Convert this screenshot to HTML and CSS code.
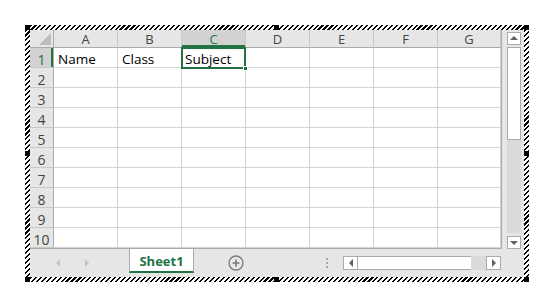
FILE: index.html
```html
<!DOCTYPE html>
<html lang="en">
<head>
    <meta charset="UTF-8">
    <title>Book1 - Embedded Sheet</title>
    <link rel="stylesheet" href="styles.css">
</head>
<body>
    <div class="frame">
        <div class="book">
            <div class="main">
                <div class="sheet">
                    <div class="corner">
                        <svg width="12" height="12" viewBox="0 0 12 12"><polygon points="12,0 12,12 0,12" fill="#bdbdbd"/></svg>
                    </div>
                    <div class="col-head">A</div>
                    <div class="col-head">B</div>
                    <div class="col-head on">C</div>
                    <div class="col-head">D</div>
                    <div class="col-head">E</div>
                    <div class="col-head">F</div>
                    <div class="col-head">G</div>

                    <div class="row-head on">1</div>
                    <div class="cell">Name</div><div class="cell">Class</div><div class="cell active">Subject</div><div class="cell"></div><div class="cell"></div><div class="cell"></div><div class="cell"></div>

                    <div class="row-head">2</div>
                    <div class="cell"></div><div class="cell"></div><div class="cell"></div><div class="cell"></div><div class="cell"></div><div class="cell"></div><div class="cell"></div>

                    <div class="row-head">3</div>
                    <div class="cell"></div><div class="cell"></div><div class="cell"></div><div class="cell"></div><div class="cell"></div><div class="cell"></div><div class="cell"></div>

                    <div class="row-head">4</div>
                    <div class="cell"></div><div class="cell"></div><div class="cell"></div><div class="cell"></div><div class="cell"></div><div class="cell"></div><div class="cell"></div>

                    <div class="row-head">5</div>
                    <div class="cell"></div><div class="cell"></div><div class="cell"></div><div class="cell"></div><div class="cell"></div><div class="cell"></div><div class="cell"></div>

                    <div class="row-head">6</div>
                    <div class="cell"></div><div class="cell"></div><div class="cell"></div><div class="cell"></div><div class="cell"></div><div class="cell"></div><div class="cell"></div>

                    <div class="row-head">7</div>
                    <div class="cell"></div><div class="cell"></div><div class="cell"></div><div class="cell"></div><div class="cell"></div><div class="cell"></div><div class="cell"></div>

                    <div class="row-head">8</div>
                    <div class="cell"></div><div class="cell"></div><div class="cell"></div><div class="cell"></div><div class="cell"></div><div class="cell"></div><div class="cell"></div>

                    <div class="row-head">9</div>
                    <div class="cell"></div><div class="cell"></div><div class="cell"></div><div class="cell"></div><div class="cell"></div><div class="cell"></div><div class="cell"></div>

                    <div class="row-head">10</div>
                    <div class="cell"></div><div class="cell"></div><div class="cell"></div><div class="cell"></div><div class="cell"></div><div class="cell"></div><div class="cell"></div>
                </div>

                <div class="vscroll">
                    <div class="sbtn"><span class="arrow up"></span></div>
                    <div class="vtrack"><div class="vthumb"></div></div>
                    <div class="sbtn"><span class="arrow down"></span></div>
                </div>
            </div>

            <div class="tabbar">
                <div class="tabnav">
                    <span class="arrow left faint"></span>
                    <span class="arrow right faint"></span>
                </div>
                <div class="tab">Sheet1</div>
                <div class="addsheet">
                    <svg width="16" height="16" viewBox="0 0 16 16">
                        <circle cx="8" cy="8" r="7" fill="none" stroke="#7a7a7a" stroke-width="1.3"/>
                        <path d="M8 4.5v7M4.5 8h7" stroke="#7a7a7a" stroke-width="1.6"/>
                    </svg>
                </div>
                <div class="split"><span></span><span></span><span></span></div>
                <div class="hscroll">
                    <div class="sbtn"><span class="arrow left"></span></div>
                    <div class="hthumb"></div>
                    <div class="htrack"></div>
                    <div class="sbtn"><span class="arrow right"></span></div>
                </div>
            </div>
        </div>

        <span class="handle tl"></span>
        <span class="handle tc"></span>
        <span class="handle tr"></span>
        <span class="handle ml"></span>
        <span class="handle mr"></span>
        <span class="handle bl"></span>
        <span class="handle bc"></span>
        <span class="handle br"></span>
    </div>
</body>
</html>
```

FILE: styles.css
```css
body {
    margin: 0;
    padding: 25px 0 0 25px;
    background-color: #fff;
    font-family: "Open Sans", "Noto Sans", sans-serif;
}
.frame {
    position: relative;
    width: 494px;
    padding: 5px;
    background: repeating-linear-gradient(135deg, #000 0 1.5px, #fff 1.5px 3.5px);
}
.book {
    background-color: #e6e6e6;
}
.main {
    display: flex;
}
.sheet {
    display: grid;
    grid-template-columns: 24px repeat(6, 64px) 63px;
    grid-template-rows: 18px repeat(10, 20px);
    background-color: #fff;
    border-right: 1px solid #ababab;
    border-bottom: 1px solid #ababab;
}
.sheet > div {
    box-sizing: border-box;
    overflow: visible;
}
.corner {
    background-color: #e6e6e6;
    border-right: 1px solid #ababab;
    border-bottom: 1px solid #ababab;
    display: flex;
    align-items: flex-end;
    justify-content: flex-end;
    padding: 0 2px 2px 0;
}
.corner svg {
    display: block;
}
.col-head {
    background-color: #e6e6e6;
    border-right: 1px solid #c8c8c8;
    border-bottom: 1px solid #ababab;
    text-align: center;
    font-size: 13px;
    padding-top: 1px;
    line-height: 17px;
    color: #444;
}
.row-head {
    background-color: #e6e6e6;
    border-right: 1px solid #ababab;
    border-bottom: 1px solid #c8c8c8;
    text-align: center;
    font-size: 14px;
    padding-top: 3px;
    line-height: 17px;
    color: #444;
}
.col-head.on {
    background-color: #d2d2d2;
    color: #217346;
    box-shadow: inset 0 -2px #217346;
}
.row-head.on {
    background-color: #d2d2d2;
    color: #217346;
    box-shadow: inset -2px 0 #217346;
}
.cell {
    border-right: 1px solid #d4d4d4;
    border-bottom: 1px solid #d4d4d4;
    padding: 3px 0 0 4px;
    font-size: 13.5px;
    line-height: 17px;
    color: #000;
    white-space: nowrap;
}
.cell.active {
    position: relative;
    padding-left: 3px;
}
.cell.active::after {
    content: "";
    position: absolute;
    top: -1px;
    left: -1px;
    right: -1px;
    bottom: -2px;
    border: 2px solid #217346;
}
.cell.active::before {
    content: "";
    position: absolute;
    right: -3px;
    bottom: -4px;
    width: 5px;
    height: 5px;
    background-color: #217346;
    border: 1px solid #fff;
    box-sizing: border-box;
    z-index: 1;
}

/* scroll bars */
.vscroll {
    width: 22px;
    display: flex;
    flex-direction: column;
    align-items: center;
    padding: 2px 0 0 1px;
    box-sizing: border-box;
}
.sbtn {
    width: 14px;
    height: 13px;
    background-color: #fff;
    border: 1px solid #ababab;
    box-sizing: border-box;
    display: flex;
    align-items: center;
    justify-content: center;
    flex-shrink: 0;
}
.vtrack {
    flex: 1;
    width: 14px;
    margin: 2px 0 3px;
    background-color: #dadada;
}
.vthumb {
    height: 93px;
    background-color: #fff;
    border: 1px solid #ababab;
    box-sizing: border-box;
}
.arrow {
    width: 0;
    height: 0;
    border: 4px solid transparent;
}
.arrow.up {
    border-bottom: 4px solid #606060;
    border-top-width: 0;
    margin-top: -1px;
}
.arrow.down {
    border-top: 4px solid #606060;
    border-bottom-width: 0;
}
.arrow.left {
    border-right: 4px solid #606060;
    border-left-width: 0;
}
.arrow.right {
    border-left: 4px solid #606060;
    border-right-width: 0;
}
.arrow.left.faint {
    border-right-color: #c4c4c4;
}
.arrow.right.faint {
    border-left-color: #c4c4c4;
}

/* sheet tabs */
.tabbar {
    display: flex;
    align-items: center;
    height: 28px;
}
.tabnav {
    width: 99px;
    display: flex;
    align-items: center;
    padding-left: 26px;
    gap: 25px;
    box-sizing: border-box;
}
.tab {
    align-self: flex-start;
    width: 65px;
    height: 24px;
    box-sizing: border-box;
    background-color: #fff;
    border-left: 1px solid #ababab;
    border-right: 1px solid #ababab;
    border-bottom: 2px solid #217346;
    text-align: center;
    font-size: 13px;
    font-weight: bold;
    padding-top: 2px;
    line-height: 20px;
    color: #217346;
}
.addsheet {
    margin-left: 34px;
    display: flex;
}
.split {
    margin-left: 82px;
    display: flex;
    flex-direction: column;
    gap: 2px;
}
.split span {
    width: 2px;
    height: 2px;
    background-color: #a8a8a8;
}
.hscroll {
    margin-left: 15px;
    display: flex;
    width: 158px;
    height: 14px;
}
.hscroll .sbtn {
    width: 15px;
    height: 14px;
}
.hthumb {
    width: 113px;
    background-color: #fff;
    border: 1px solid #ababab;
    border-left: 0;
    border-right: 0;
    box-sizing: border-box;
}
.htrack {
    flex: 1;
    background-color: #dadada;
}

/* selection handles */
.handle {
    position: absolute;
    width: 5px;
    height: 5px;
    background-color: #000;
}
.handle.tl { left: 0; top: 0; }
.handle.tc { left: 249px; top: 0; }
.handle.tr { right: 0; top: 0; }
.handle.ml { left: 0; top: 126px; }
.handle.mr { right: 0; top: 126px; }
.handle.bl { left: 0; bottom: 0; }
.handle.bc { left: 249px; bottom: 0; }
.handle.br { right: 0; bottom: 0; }
```
